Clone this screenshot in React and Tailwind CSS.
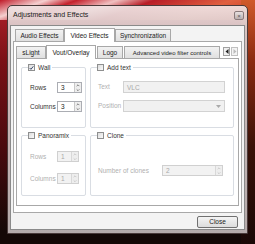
import React from "react";

const font = { fontFamily: '"Liberation Sans", Arial, sans-serif' };

function Check({ checked }) {
  return (
    <span className="inline-flex items-center justify-center w-[7px] h-[7px] border border-[#8e8f8f] bg-gradient-to-br from-[#dcdcdc] to-[#fafafa]">
      {checked && (
        <svg width="6" height="6" viewBox="0 0 6 6">
          <path d="M0.8 3 L2.3 4.6 L5.2 1" stroke="#3b4a6b" strokeWidth="1.2" fill="none" />
        </svg>
      )}
    </span>
  );
}

function Spin({ value, disabled, w = "w-[25px]" }) {
  return (
    <div className={`flex h-[11px] ${w} border ${disabled ? "border-[#d0d0d0] bg-[#f2f2f2] text-[#a8a8a8]" : "border-[#abadb3] bg-white text-[#222]"}`}>
      <span className="flex-1 pl-[3px] leading-[10px] text-[6.5px]">{value}</span>
      <div className={`flex flex-col w-[7px] border-l ${disabled ? "border-[#d8d8d8]" : "border-[#c8c8c8]"} bg-[#eeeeee]`}>
        <svg width="6" height="5" viewBox="0 0 6 5"><path d="M1.5 3.5 L3 2 L4.5 3.5" stroke={disabled ? "#bbb" : "#555"} fill="none" strokeWidth="0.8" /></svg>
        <svg width="6" height="5" viewBox="0 0 6 5"><path d="M1.5 1.5 L3 3 L4.5 1.5" stroke={disabled ? "#bbb" : "#555"} fill="none" strokeWidth="0.8" /></svg>
      </div>
    </div>
  );
}

function Group({ label, checked, className, children }) {
  return (
    <div className={`relative border border-[#d9dde3] rounded-[2px] ${className}`}>
      <div className="absolute -top-[5px] left-[6px] flex items-center gap-[3px] bg-white pr-[2px] text-[6.5px] leading-[9px] text-[#333]">
        <Check checked={checked} />
        <span>{label}</span>
      </div>
      {children}
    </div>
  );
}

const tabOff = "h-[12px] border border-b-0 border-[#a8a8a8] bg-[linear-gradient(180deg,#f2f2f2,#e0e0e0)] leading-[12px] text-center whitespace-nowrap overflow-hidden";
const tabOn = "h-[14px] border border-b-0 border-[#a8a8a8] bg-white leading-[13px] -mb-px relative z-10 text-center whitespace-nowrap";

export default function App() {
  return (
    <div className="relative w-[255px] h-[244px] overflow-hidden bg-[#140806]" style={font}>
      {/* wallpaper */}
      <div className="absolute inset-0 bg-[linear-gradient(180deg,#b3202a_0%,#7a1016_25%,#4a0a0e_60%,#140806_95%)]" />
      <div className="absolute left-0 top-0 w-[255px] h-[20px] bg-[linear-gradient(160deg,#c01a28_0%,#f5d0d0_15%,#c4202c_25%,#f0c0c0_38%,#b81c26_50%,#e06040_75%,#c8361c_100%)]" />
      <div className="absolute right-0 top-0 w-[14px] h-[244px] bg-[linear-gradient(180deg,#d05a2a_0%,#8a2a10_25%,#3a1208_60%,#1a0806_100%)]" />

      {/* window */}
      <div className="absolute left-[7px] top-[5px] w-[241px] h-[229px] rounded-t-[5px] border border-[#4a3a3a] bg-[linear-gradient(180deg,rgba(240,225,225,0.94)_0%,rgba(220,205,205,0.92)_10%,rgba(195,185,185,0.92)_100%)] flex flex-col px-[2px] pb-[3px]">
        <div className="flex items-center h-[19px] pl-[3px] pr-[1px]">
          <span className="text-[7px] text-[#1a1a1a] flex-1">Adjustments and Effects</span>
          <div className="w-[10px] h-[9px] border border-[#8a7a7a] rounded-[2px] bg-[linear-gradient(180deg,#e8e0e0,#bcb0b0)] flex items-center justify-center text-[6px] leading-none text-[#555]">×</div>
        </div>
        <div className="flex-1 flex flex-col bg-[#f3f3f3] border border-[#8a8a8a] px-[2px] pt-[1px]">
          {/* top tabs */}
          <div className="flex items-end h-[14px] pl-[2px] text-[6.5px] text-[#222]">
            <div className={`${tabOff} w-[49px]`}>Audio Effects</div>
            <div className={`${tabOn} w-[51px]`}>Video Effects</div>
            <div className={`${tabOff} w-[56px]`}>Synchronization</div>
          </div>
          <div className="flex-1 flex flex-col border border-[#a8a8a8] bg-white px-[2px] pt-[2px] pb-[6px]">
            {/* sub tabs */}
            <div className="flex items-end h-[14px] text-[6.5px] text-[#222]">
              <div className={`${tabOff} w-[30px]`}>sLight</div>
              <div className={`${tabOn} w-[50px]`}>Vout/Overlay</div>
              <div className={`${tabOff} w-[26px] ml-[1px]`}>Logo</div>
              <div className={`${tabOff} w-[96px] ml-[1px] text-[6px]`}>Advanced video filter controls</div>
              <div className="flex ml-[3px] mb-[2px] gap-px">
                <div className="w-[7px] h-[9px] border border-[#a0a0a0] bg-[#f0f0f0] flex items-center justify-center">
                  <svg width="4" height="5" viewBox="0 0 4 5"><path d="M3.5 0 L0.5 2.5 L3.5 5 Z" fill="#222" /></svg>
                </div>
                <div className="w-[7px] h-[9px] border border-[#c0c0c0] bg-[#f4f4f4] flex items-center justify-center">
                  <svg width="4" height="5" viewBox="0 0 4 5"><path d="M0.5 0 L3.5 2.5 L0.5 5 Z" fill="#bbb" /></svg>
                </div>
              </div>
            </div>
            <div className="flex-1 border border-[#a8a8a8] bg-white px-[4px] pt-[8px] pb-[9px] grid grid-cols-[65px_1fr] grid-rows-2 gap-x-[4px] gap-y-[7px]">
              <Group label="Wall" checked>
                <div className="flex flex-col gap-[8px] pt-[14px] pl-[8px] text-[6.5px] text-[#333]">
                  <div className="flex items-center"><span className="w-[27px]">Rows</span><Spin value="3" /></div>
                  <div className="flex items-center"><span className="w-[27px]">Columns</span><Spin value="3" /></div>
                </div>
              </Group>
              <Group label="Add text">
                <div className="flex flex-col gap-[7px] pt-[13px] pl-[7px] pr-[8px] text-[6.5px] text-[#b0b0b0]">
                  <div className="flex items-center">
                    <span className="w-[25px]">Text</span>
                    <div className="flex-1 h-[12px] border border-[#d2d2d2] bg-[#f1f1f1] pl-[3px] leading-[11px] text-[#a8a8a8]">VLC</div>
                  </div>
                  <div className="flex items-center">
                    <span className="w-[25px] whitespace-nowrap">Position</span>
                    <div className="flex-1 h-[12px] border border-[#d2d2d2] bg-[#f1f1f1] flex items-center justify-end pr-[3px]">
                      <svg width="5" height="3" viewBox="0 0 5 3"><path d="M0 0 L5 0 L2.5 3 Z" fill="#aaa" /></svg>
                    </div>
                  </div>
                </div>
              </Group>
              <Group label="Panoramix">
                <div className="flex flex-col gap-[11px] pt-[15px] pl-[8px] text-[6.5px] text-[#b0b0b0]">
                  <div className="flex items-center"><span className="w-[27px]">Rows</span><Spin value="1" disabled w="w-[22px]" /></div>
                  <div className="flex items-center"><span className="w-[27px]">Columns</span><Spin value="1" disabled w="w-[22px]" /></div>
                </div>
              </Group>
              <Group label="Clone">
                <div className="flex items-center pt-[29px] pl-[7px] pr-[10px] text-[6.5px] text-[#b0b0b0]">
                  <span className="w-[64px]">Number of clones</span>
                  <Spin value="2" disabled w="flex-1" />
                </div>
              </Group>
            </div>
          </div>
          <div className="flex justify-end pt-[3px] pb-[1px] pr-[4px]">
            <div className="w-[41px] h-[12px] border border-[#707070] rounded-[2px] bg-[linear-gradient(180deg,#f4f4f4,#dcdcdc)] text-[6.5px] leading-[10px] text-center text-[#222]">Close</div>
          </div>
        </div>
      </div>
    </div>
  );
}
